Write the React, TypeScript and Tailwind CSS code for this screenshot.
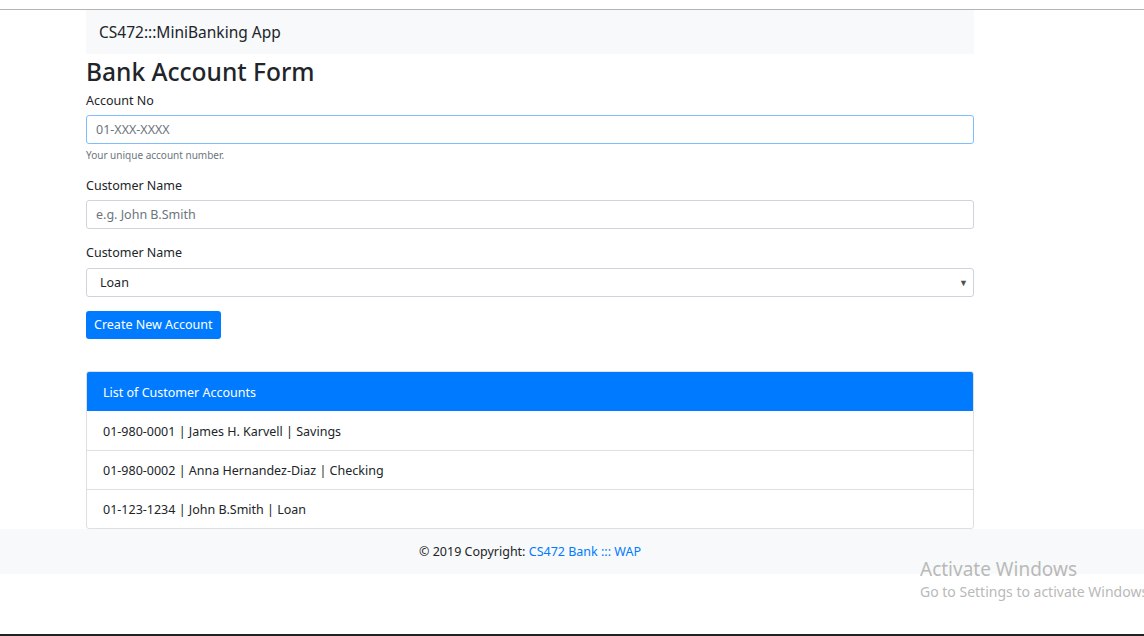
import React from "react";

const accounts = [
  { no: "01-980-0001", name: "James H. Karvell", type: "Savings" },
  { no: "01-980-0002", name: "Anna Hernandez-Diaz", type: "Checking" },
  { no: "01-123-1234", name: "John B.Smith", type: "Loan" },
];

const font = { fontFamily: '"Noto Sans", "Open Sans", Arial, sans-serif' };

const App: React.FC = () => {
  return (
    <div
      className="relative h-[636px] w-full overflow-hidden bg-white text-[#212529]"
      style={font}
    >
      <div className="h-[10px] border-b border-[#b4b4b4]" />

      <div className="ml-[86px] w-[888px]">
        <nav className="flex h-[44px] items-center bg-[#f8f9fa] px-[13px] pt-[2px] text-[15.5px]">
          CS472:::MiniBanking App
        </nav>

        <h2 className="mt-[2px] text-[24.5px] font-medium leading-[32px]">Bank Account Form</h2>

        <form className="flex flex-col" onSubmit={(e) => e.preventDefault()}>
          <label className="mt-[3px] text-[12.5px] leading-[19px]">Account No</label>
          <input
            type="text"
            placeholder="01-XXX-XXXX"
            className="mt-[5px] h-[29px] rounded-[3px] border border-[#80bdff] px-[9px] text-[12.5px] outline-none placeholder:text-[#6c757d]"
          />
          <small className="mt-[4px] text-[10px] leading-[15px] text-[#6c757d]">
            Your unique account number.
          </small>

          <label className="mt-[13px] text-[12.5px] leading-[19px]">Customer Name</label>
          <input
            type="text"
            placeholder="e.g. John B.Smith"
            className="mt-[5px] h-[29px] rounded-[3px] border border-[#ced4da] px-[9px] text-[12.5px] outline-none placeholder:text-[#6c757d]"
          />

          <label className="mt-[14px] text-[12.5px] leading-[19px]">Customer Name</label>
          <div className="relative mt-[6px] flex h-[29px] items-center rounded-[3px] border border-[#ced4da] pl-[13px] pt-[2px] text-[12.5px]">
            Loan
            <span className="absolute right-[5px] top-[7px] text-[9px] text-[#495057]">▼</span>
          </div>

          <div className="mt-[14px]">
            <button
              type="submit"
              className="h-[28px] rounded-[3px] bg-[#007bff] px-[8px] pt-[1px] text-[12.5px] text-white"
            >
              Create New Account
            </button>
          </div>
        </form>

        <div className="mt-[32px] overflow-hidden rounded-[3px] border border-[#dfdfdf]">
          <div className="flex h-[39px] items-center bg-[#007bff] px-[16px] pt-[3px] text-[12.5px] text-white">
            List of Customer Accounts
          </div>
          {accounts.map((a, i) => (
            <div
              key={a.no}
              className={`flex h-[39px] items-center px-[16px] pt-[3px] text-[12.5px] ${
                i > 0 ? "border-t border-[#dfdfdf]" : ""
              }`}
            >
              {a.no} | {a.name} | {a.type}
            </div>
          ))}
        </div>
      </div>

      <footer className="h-[45px] bg-[#f8f9fa]">
        <div className="ml-[86px] flex h-[45px] w-[888px] items-center justify-center pt-[2px] text-[12.5px]">
          © 2019 Copyright:&nbsp;<a className="text-[#007bff]">CS472 Bank ::: WAP</a>
        </div>
      </footer>

      <div className="absolute left-[920px] top-[556px] whitespace-nowrap text-[#b9b9b9]">
        <div className="text-[19px] leading-[26px]">Activate Windows</div>
        <div className="text-[14px] leading-[20px]">Go to Settings to activate Windows.</div>
      </div>

      <div className="absolute bottom-0 left-0 h-[2px] w-full bg-[#222]" />
    </div>
  );
};

export default App;
